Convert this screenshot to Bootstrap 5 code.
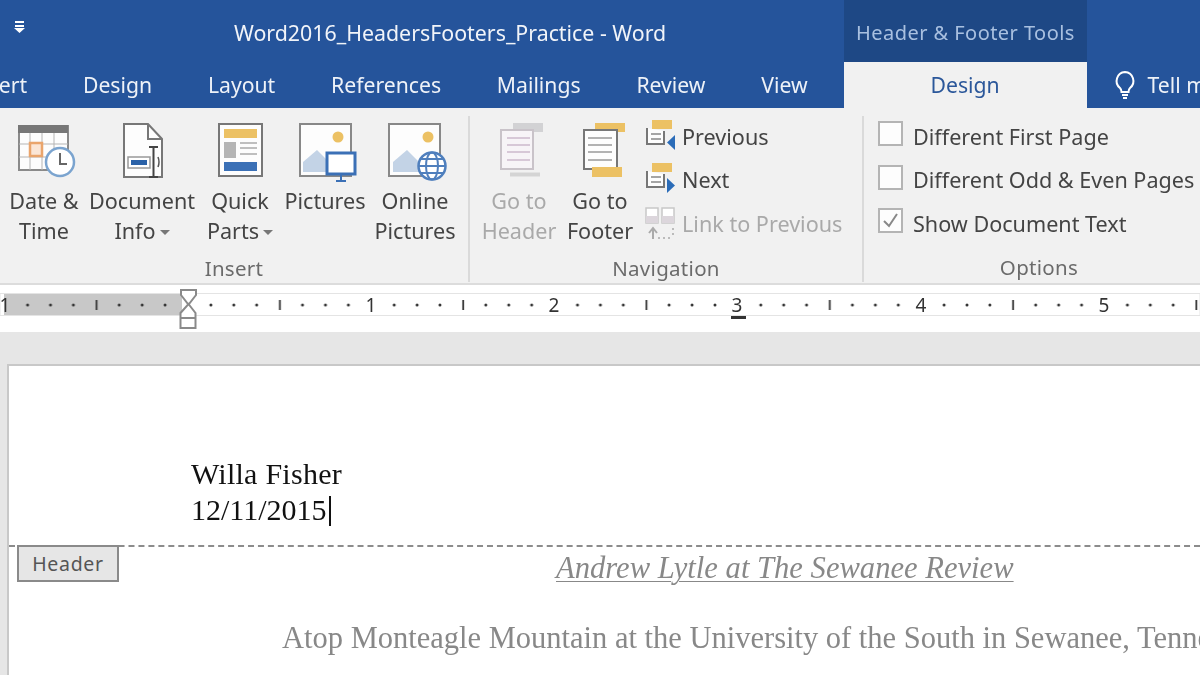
<!DOCTYPE html>
<html lang="en">
<head>
<meta charset="utf-8">
<title>Word</title>
<link href="https://cdn.jsdelivr.net/npm/bootstrap@5.3.0/dist/css/bootstrap.min.css" rel="stylesheet">
<style>
html,body{width:1200px;height:675px;overflow:hidden;background:#fff}
body{font-family:"Noto Sans","Open Sans",sans-serif;color:#444}
.wd-app{filter:blur(.35px)}
.wd-title{height:62px;background:#25549b;color:#fff}
.wd-qat{width:234px;padding:21px 0 0 14px}
.wd-doc{font-size:21.35px;width:610px;line-height:32px;padding-top:17px;color:#f1f4f9}
.wd-tools{width:243px;background:#1e4885;color:#a9c0e0;font-size:20px;letter-spacing:.45px;padding-top:18px;padding-left:12px;line-height:30px;white-space:nowrap}
.wd-tabs{height:46px;background:#25549b;color:#eef2f8;font-size:21.2px;line-height:46px;white-space:nowrap}
.wd-tab{flex:none;text-align:center;padding:0 27.9px}
.wd-tab-first{margin-left:-59.5px}
.wd-tab-on{background:#f1f1f1;color:#2b579a;width:243px;margin-left:8px}
.wd-tab-tell{padding:0;margin-left:27px}
.wd-ribbon{height:177px;background:#f1f1f1;border-bottom:2px solid #dcdcdc;font-size:21.6px;line-height:30px;color:#444}
.wd-group{flex:none;position:relative;height:166px;margin-top:8px;border-right:2px solid #dadada}
.wd-cmds{height:138px}
.wd-cmd{flex:none;text-align:center;white-space:nowrap}
.wd-cmd svg{display:block;margin:0 auto 2px;height:68px;width:68px}
.wd-off{color:#a9a9a9}
.wd-label{text-align:center;font-size:20.5px;color:#6b6b6b;line-height:28px;letter-spacing:.3px}
.wd-stack{padding-left:5px;margin-top:-1px}
.wd-small{line-height:44px;height:43.5px;white-space:nowrap}
.wd-small>svg{width:32px;height:36px;margin-right:5px;flex:none}
.wd-optbox{padding-left:14px;margin-top:-1px}
.wd-check{width:25px;height:25px;border:2px solid #b4b4b4;background:#fdfdfd;margin:-6px 10px 0 0;flex:none}
.wd-check svg{width:17px;height:15px}
.wd-caret{display:inline-block;width:0;height:0;border:5px solid transparent;border-top-color:#777;border-bottom:0;vertical-align:4px;margin-left:4px}
.wd-ruler{height:47px;background:#fff;overflow:hidden}
.wd-ruler svg{display:block}
.wd-ruler text{font-family:"Noto Sans",sans-serif;font-size:19px;fill:#333;text-anchor:middle}
.wd-gutter{height:32px;background:#e6e6e6}
.wd-work{height:311px;background:#e6e6e6;padding-left:7px}
.wd-page{height:311px;background:#fff;border-top:2px solid #c8c8c8;border-left:2px solid #c8c8c8;position:relative;overflow:hidden}
.wd-head{font-family:"Liberation Serif",serif;font-size:30px;line-height:36px;color:#111;padding:90px 0 0 182px;height:179px}
.wd-cursor{display:inline-block;width:2px;height:30px;background:#111;vertical-align:-6px;margin-left:2px}
.wd-name{letter-spacing:.25px}
.wd-dash{border-top:2px dashed #8c8c8c}
.wd-tag{position:absolute;left:8px;top:179px;width:102px;height:37px;border:2px solid #8a8a8a;background:#e6e6e6;font-size:19.5px;letter-spacing:.7px;text-align:center;line-height:33px;color:#555}
.wd-body{font-family:"Liberation Serif",serif;color:#888;white-space:nowrap}
.wd-subtitle{font-style:italic;font-size:30.6px;line-height:36px;text-decoration:underline;text-decoration-thickness:1px;text-underline-offset:3px;padding-left:547px;padding-top:3px}
.wd-para{font-size:30.5px;line-height:36px;padding-left:273px;padding-top:34px}
</style>
</head>
<body>
<div class="wd-app">
<div class="wd-title d-flex">
  <div class="wd-qat">
    <svg class="d-block" width="12" height="12" viewBox="0 0 12 12" aria-hidden="true"><path d="M1 0h9v2H1zM1 4h9v2H1zM0 7h11L5.500 12z" fill="#fff"/></svg>
  </div>
  <div class="wd-doc">Word2016_HeadersFooters_Practice - Word</div>
  <div class="wd-tools">Header &amp; Footer Tools</div>
</div>
<div class="wd-tabs d-flex">
  <div class="wd-tab wd-tab-first">Insert</div>
  <div class="wd-tab">Design</div>
  <div class="wd-tab">Layout</div>
  <div class="wd-tab">References</div>
  <div class="wd-tab">Mailings</div>
  <div class="wd-tab">Review</div>
  <div class="wd-tab">View</div>
  <div class="wd-tab wd-tab-on">Design</div>
  <div class="wd-tab wd-tab-tell d-flex align-items-center">
    <svg width="22" height="30" viewBox="0 0 22 30" aria-hidden="true" class="me-2"><path d="M11 2a9 9 0 0 0-5 16c1 1 1.500 3 1.500 4h7c0-1 .5-3 1.500-4a9 9 0 0 0-5-16z" fill="none" stroke="#fff" stroke-width="2"/><path d="M8 25h6M9 28h4" stroke="#fff" stroke-width="2"/></svg>
    <span class="ms-1">Tell me</span>
  </div>
</div>
<div class="wd-ribbon d-flex">
  <div class="wd-group" style="width:470px">
    <div class="wd-cmds d-flex">
      <div class="wd-cmd" style="width:88px">
        <svg viewBox="0 0 68 68" aria-hidden="true"><rect x="9" y="10" width="49" height="44" fill="#fdfdfd" stroke="#8a8a8a" stroke-width="2"/><rect x="8" y="9" width="50" height="8" fill="#777"/><path d="M20 17v37M32 17v37M44 17v37M9 28h49M9 41h49" stroke="#b5b5b5"/><rect x="20" y="27" width="12" height="13" fill="#fbe6d6" stroke="#eaa56c" stroke-width="2.500"/><circle cx="50" cy="46" r="14" fill="#fff" stroke="#7ba4cf" stroke-width="2.500"/><path d="M50 37v11h7" fill="none" stroke="#666" stroke-width="2"/></svg>
        Date &amp;<br>Time
      </div>
      <div class="wd-cmd" style="width:108px">
        <svg viewBox="0 0 68 68" aria-hidden="true"><path d="M16 8h24l14 15v38H16z" fill="#fdfdfd" stroke="#777" stroke-width="2"/><path d="M40 8v15h14" fill="none" stroke="#777" stroke-width="2"/><rect x="20" y="41" width="22" height="11" fill="#fff" stroke="#999" stroke-width="1.500"/><rect x="23" y="44" width="16" height="5" fill="#2b62a8"/><path d="M41 31h9M45.500 31v30M41 61h9" stroke="#444" stroke-width="2" fill="none"/><path d="M50 41q2 5 0 10" stroke="#555" stroke-width="1.500" fill="none"/></svg>
        Document<br>Info<span class="wd-caret"></span>
      </div>
      <div class="wd-cmd" style="width:88px">
        <svg viewBox="0 0 68 68" aria-hidden="true"><rect x="13" y="8" width="43" height="52" fill="#fdfdfd" stroke="#777" stroke-width="2"/><rect x="18" y="13" width="33" height="9" fill="#ecc164"/><rect x="18" y="26" width="12" height="16" fill="#b5b5b5"/><path d="M34 27h17M34 32h17M34 38h17" stroke="#aaa" stroke-width="1.500"/><rect x="18" y="46" width="33" height="9" fill="#3b70b6"/></svg>
        Quick<br>Parts<span class="wd-caret"></span>
      </div>
      <div class="wd-cmd" style="width:82px">
        <svg viewBox="0 0 68 68" aria-hidden="true"><rect x="9" y="8" width="51" height="52" fill="#fdfdfd" stroke="#888" stroke-width="2"/><circle cx="47" cy="21" r="5.500" fill="#ecc164"/><path d="M12 56V46l14-12 14 14v8z" fill="#c3d3e6"/><rect x="36" y="37" width="28" height="21" fill="#fff" stroke="#3b70b6" stroke-width="3"/><path d="M45 65h10" stroke="#3b70b6" stroke-width="2"/><path d="M50 59v5" stroke="#3b70b6" stroke-width="2"/></svg>
        Pictures
      </div>
      <div class="wd-cmd" style="width:98px">
        <svg viewBox="0 0 68 68" aria-hidden="true"><rect x="8" y="8" width="51" height="52" fill="#fdfdfd" stroke="#888" stroke-width="2"/><circle cx="47" cy="21" r="5.500" fill="#ecc164"/><path d="M12 56V46l14-12 14 14v8z" fill="#c3d3e6"/><circle cx="51" cy="50" r="13.500" fill="#fff" stroke="#4f7fbd" stroke-width="2.500"/><ellipse cx="51" cy="50" rx="6" ry="13.500" fill="none" stroke="#4f7fbd" stroke-width="2"/><path d="M38 50h26M40 43h22M40 57h22" stroke="#4f7fbd" stroke-width="2"/></svg>
        Online<br>Pictures
      </div>
    </div>
    <div class="wd-label">Insert</div>
  </div>
  <div class="wd-group" style="width:394px">
    <div class="wd-cmds d-flex ps-2">
      <div class="wd-cmd wd-off" style="width:82px">
        <svg viewBox="0 0 68 68" aria-hidden="true"><rect x="28" y="7" width="30" height="9" fill="#d2d2d4"/><rect x="16" y="14" width="32" height="39" fill="#f7f4f7" stroke="#c9c3c9" stroke-width="2"/><path d="M22 22h23M22 29h23M22 36h23M22 44h23" stroke="#d7c8d7" stroke-width="2"/><path d="M25 58.500h30" stroke="#d4d4d4" stroke-width="4"/></svg>
        Go to<br>Header
      </div>
      <div class="wd-cmd" style="width:80px">
        <svg viewBox="0 0 68 68" aria-hidden="true"><path d="M29 7h30v9H29z" fill="#ecc164"/><rect x="18" y="14" width="33" height="39" fill="#fdfdfd" stroke="#777" stroke-width="2"/><path d="M22 22h24M22 29h24M22 36h24M22 44h24" stroke="#999" stroke-width="1.500"/><rect x="26" y="51" width="30" height="10" fill="#ecc164"/></svg>
        Go to<br>Footer
      </div>
      <div class="wd-stack">
        <div class="wd-small d-flex align-items-center">
          <svg viewBox="0 0 32 36" aria-hidden="true"><path d="M2 9v16h17V12" fill="#fdfdfd" stroke="#777" stroke-width="2"/><rect x="7" y="1" width="20" height="9" fill="#ecc164"/><path d="M6 15h10M6 20h10" stroke="#888" stroke-width="1.500"/><path d="M30 16v15l-8-7.500z" fill="#2b6cb8"/></svg>
          Previous
        </div>
        <div class="wd-small d-flex align-items-center">
          <svg viewBox="0 0 32 36" aria-hidden="true"><path d="M2 9v16h17V12" fill="#fdfdfd" stroke="#777" stroke-width="2"/><rect x="7" y="1" width="20" height="9" fill="#ecc164"/><path d="M6 15h10M6 20h10" stroke="#888" stroke-width="1.500"/><path d="M22 16v15l8-7.500z" fill="#2b6cb8"/></svg>
          Next
        </div>
        <div class="wd-small wd-off d-flex align-items-center">
          <svg viewBox="0 0 32 36" aria-hidden="true"><rect x="1" y="2" width="12" height="15" fill="#fff" stroke="#c8c8c8" stroke-width="1.500"/><rect x="17" y="2" width="12" height="15" fill="#fff" stroke="#c8c8c8" stroke-width="1.500"/><path d="M1 10h12v7H1zM17 10h12v7H17z" fill="#dcd6dc"/><path d="M8 33V22M4 27l4-5 4 5" fill="none" stroke="#aaa" stroke-width="2"/><path d="M13 32h12M28 22v10" stroke="#bbb" stroke-width="2" stroke-dasharray="2 3"/></svg>
          Link to Previous
        </div>
      </div>
    </div>
    <div class="wd-label">Navigation</div>
  </div>
  <div class="wd-group border-0" style="width:336px">
    <div class="wd-cmds wd-optbox">
      <div class="wd-small d-flex align-items-center"><span class="wd-check"></span>Different First Page</div>
      <div class="wd-small d-flex align-items-center"><span class="wd-check"></span>Different Odd &amp; Even Pages</div>
      <div class="wd-small d-flex align-items-center"><span class="wd-check d-flex align-items-center justify-content-center"><svg viewBox="0 0 17 15" aria-hidden="true"><path d="M2 8l5 5 8-12" fill="none" stroke="#888" stroke-width="2"/></svg></span>Show Document Text</div>
    </div>
    <div class="wd-label" style="width:350px">Options</div>
  </div>
</div>
<div class="wd-ruler">
  <svg width="1200" height="47" viewBox="0 0 1200 47" role="img" aria-label="Ruler">
    <defs><pattern id="wdticks" x="188" y="0" width="183.300" height="47" patternUnits="userSpaceOnUse">
      <g fill="#333"><circle cx="22.900" cy="20" r="1.500"/><circle cx="45.800" cy="20" r="1.500"/><circle cx="68.700" cy="20" r="1.500"/><rect x="91" y="15" width="1.800" height="10"/><circle cx="114.500" cy="20" r="1.500"/><circle cx="137.500" cy="20" r="1.500"/><circle cx="160.400" cy="20" r="1.500"/></g>
    </pattern></defs>
    <rect x="0" y="8.500" width="1200" height="22" fill="#fff" stroke="#e4e4e4"/>
    <rect x="4" y="9" width="178" height="21" fill="#c8c8c8"/>
    <rect x="0" y="0" width="1200" height="47" fill="url(#wdticks)"/>
    <text x="5" y="27">1</text><text x="371" y="27">1</text><text x="554" y="27">2</text><text x="737" y="27">3</text><text x="921" y="27">4</text><text x="1104" y="27">5</text>
    <path d="M731 32.500h15" stroke="#333" stroke-width="3" fill="none"/>
    <path d="M181 5h15v5l-7 9-1 0-7-9z" fill="#fff" stroke="#8a8a8a" stroke-width="2"/>
    <path d="M188.500 19l7 9v15h-15V28z" fill="#fff" stroke="#8a8a8a" stroke-width="2"/><path d="M181 33h15" stroke="#8a8a8a" stroke-width="2"/>
  </svg>
</div>
<div class="wd-gutter"></div>
<div class="wd-work">
  <div class="wd-page">
    <div class="wd-head"><span class="wd-name">Willa Fisher</span><br>12/11/2015<span class="wd-cursor"></span></div>
    <div class="wd-dash"></div>
    <div class="wd-tag">Header</div>
    <div class="wd-body wd-subtitle">Andrew Lytle at The Sewanee Review</div>
    <div class="wd-body wd-para">Atop Monteagle Mountain at the University of the South in Sewanee, Tennessee</div>
  </div>
</div>
</div>
<script src="https://cdn.jsdelivr.net/npm/bootstrap@5.3.0/dist/js/bootstrap.bundle.min.js"></script>
</body>
</html>
